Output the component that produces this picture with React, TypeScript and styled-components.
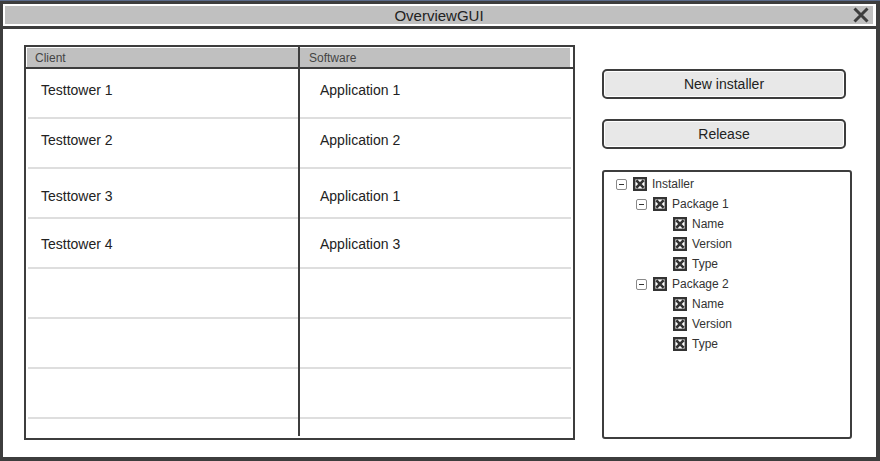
import React from 'react';
import styled, { createGlobalStyle } from 'styled-components';

const Global = createGlobalStyle`
  html, body { margin: 0; padding: 0; }
  body {
    width: 880px; height: 461px; overflow: hidden;
    background: #3d3d3d;
    font-family: "Liberation Sans", Arial, sans-serif;
    color: #222;
  }
`;

const Screen = styled.div`
  width: 880px; height: 461px; box-sizing: border-box;
  border-top: 1px solid #5a6a8a;
  padding: 3px 4px 4px 3px;
  background: #3d3d3d;
`;

const Frame = styled.div`
  width: 100%; height: 100%;
  background: #fff;
  display: flex; flex-direction: column;
`;

const TitleBar = styled.div`
  position: relative;
  margin: 2px 3px 2px 2px;
  height: 18px;
  background: #c0c0c0;
  display: flex; align-items: center; justify-content: center;
  font-size: 15px;
  color: #222;
`;

const Close = styled.svg`
  position: absolute; right: 4px; top: 1px;
`;

const TitleRule = styled.div`
  height: 3px; background: #3d3d3d;
`;

const Content = styled.div`
  flex: 1;
  display: flex; align-items: flex-start;
  padding: 16px 0 0 21px;
  gap: 27px;
`;

const Table = styled.div`
  width: 551px; height: 395px; box-sizing: border-box;
  border: 2px solid #3d3d3d;
  padding-bottom: 2px;
  display: flex;
`;

const Column = styled.div<{ $right?: boolean }>`
  flex: ${p => (p.$right ? '1' : '0 0 272px')};
  display: flex; flex-direction: column;
  overflow: hidden;
  border-left: ${p => (p.$right ? '2px solid #3d3d3d' : 'none')};
`;

const HeaderCell = styled.div<{ $right?: boolean }>`
  margin: 1px ${p => (p.$right ? '3px' : '0')} 0 ${p => (p.$right ? '0' : '1px')};
  height: 19px; flex: none;
  background: #c0c0c0;
  display: flex; align-items: center;
  padding-left: ${p => (p.$right ? '9px' : '8px')};
  font-size: 12px; color: #444;
`;

const HeaderRule = styled.div`
  height: 2px; flex: none; background: #3d3d3d;
`;

const Row = styled.div<{ $right?: boolean; $shift: number }>`
  flex: none;
  border-bottom: 2px solid #dedede;
  margin: 0 ${p => (p.$right ? '2px' : '0')} 0 ${p => (p.$right ? '0' : '2px')};
  padding: ${p => 12 + p.$shift}px 0 0 ${p => (p.$right ? '20px' : '13px')};
  box-sizing: content-box;
  height: ${p => 36 - p.$shift}px;
  font-size: 14px; line-height: 18px; color: #222;
`;

const Side = styled.div`
  width: 250px;
  margin-top: 24px;
  display: flex; flex-direction: column;
`;

const Button = styled.button`
  width: 244px; height: 30px; box-sizing: border-box;
  border: 2px solid #3d3d3d; border-radius: 5px;
  background: #e8e8e8;
  box-shadow: inset 0 0 0 1px #fff;
  font-family: inherit; font-size: 14px; color: #222;
  padding: 0; margin-bottom: 20px;
`;

const TreeBox = styled.div`
  margin-top: 1px;
  width: 250px; height: 269px; box-sizing: border-box;
  border: 2px solid #3d3d3d; border-radius: 3px;
  padding: 2px 0 0 12px;
`;

const TreeRow = styled.div<{ $level: number }>`
  height: 20px;
  display: flex; align-items: center;
  padding-left: ${p => p.$level * 20}px;
  font-size: 12px; color: #333;
`;

const Toggle = styled.span<{ $hidden?: boolean }>`
  width: 9px; height: 9px; flex: none;
  border: 1px solid ${p => (p.$hidden ? 'transparent' : '#8a8a8a')};
  border-radius: 2px;
  margin-right: 6px;
  position: relative;
  &::after {
    content: '';
    display: ${p => (p.$hidden ? 'none' : 'block')};
    position: absolute; left: 2px; right: 2px; top: 4px; height: 1px;
    background: #333;
  }
`;

const Check = styled.svg`
  flex: none; margin-right: 5px;
`;

const CheckBox = () => (
  <Check width="14" height="14" viewBox="0 0 14 14">
    <rect x="1.2" y="1.2" width="11.6" height="11.6" fill="#fff" stroke="#333" strokeWidth="2.4" />
    <path d="M4.2 4.2 L9.8 9.8 M9.8 4.2 L4.2 9.8" stroke="#333" strokeWidth="2.6" strokeLinecap="square" />
  </Check>
);

const rows = [
  { client: 'Testtower 1', app: 'Application 1', shift: 0 },
  { client: 'Testtower 2', app: 'Application 2', shift: 0 },
  { client: 'Testtower 3', app: 'Application 1', shift: 6 },
  { client: 'Testtower 4', app: 'Application 3', shift: 4 },
  { client: '', app: '', shift: 0 },
  { client: '', app: '', shift: 0 },
  { client: '', app: '', shift: 0 },
  { client: '', app: '', shift: 0 },
];

const tree: { label: string; level: number; toggle: boolean }[] = [
  { label: 'Installer', level: 0, toggle: true },
  { label: 'Package 1', level: 1, toggle: true },
  { label: 'Name', level: 2, toggle: false },
  { label: 'Version', level: 2, toggle: false },
  { label: 'Type', level: 2, toggle: false },
  { label: 'Package 2', level: 1, toggle: true },
  { label: 'Name', level: 2, toggle: false },
  { label: 'Version', level: 2, toggle: false },
  { label: 'Type', level: 2, toggle: false },
];

export default function App() {
  return (
    <>
      <Global />
      <Screen>
        <Frame>
          <TitleBar>
            OverviewGUI
            <Close width="16" height="16" viewBox="0 0 16 16">
              <path d="M1.5 1.5 L14.5 14.5 M14.5 1.5 L1.5 14.5" stroke="#3d3d3d" strokeWidth="3" />
            </Close>
          </TitleBar>
          <TitleRule />
          <Content>
            <Table>
              <Column>
                <HeaderCell>Client</HeaderCell>
                <HeaderRule />
                {rows.map((r, i) => (
                  <Row key={i} $shift={r.shift}>{r.client}</Row>
                ))}
              </Column>
              <Column $right>
                <HeaderCell $right>Software</HeaderCell>
                <HeaderRule />
                {rows.map((r, i) => (
                  <Row key={i} $right $shift={r.shift}>{r.app}</Row>
                ))}
              </Column>
            </Table>
            <Side>
              <Button>New installer</Button>
              <Button>Release</Button>
              <TreeBox>
                {tree.map((t, i) => (
                  <TreeRow key={i} $level={t.level}>
                    <Toggle $hidden={!t.toggle} />
                    <CheckBox />
                    {t.label}
                  </TreeRow>
                ))}
              </TreeBox>
            </Side>
          </Content>
        </Frame>
      </Screen>
    </>
  );
}
